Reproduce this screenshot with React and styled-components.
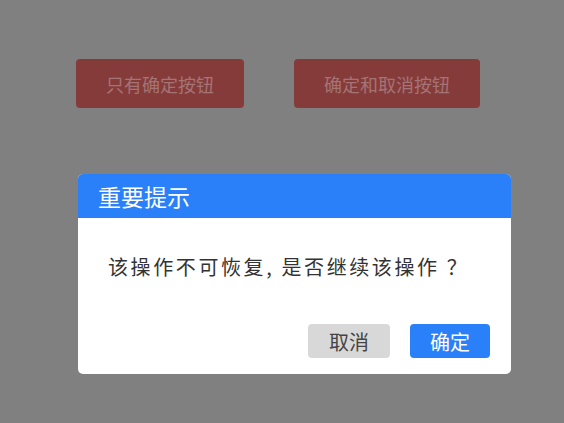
import React from "react";
import styled, { createGlobalStyle } from "styled-components";

const GlobalStyle = createGlobalStyle`
  html, body {
    margin: 0;
    padding: 0;
    background: #808080;
  }
  body {
    font-family: "Microsoft YaHei", "Noto Sans CJK SC", "Noto Sans", sans-serif;
  }
`;

const Page = styled.div`
  width: 564px;
  height: 423px;
  box-sizing: border-box;
  padding: 59px 0 0 76px;
  background: #808080;
`;

const Toolbar = styled.div`
  display: flex;
  gap: 50px;
`;

const DemoButton = styled.button`
  width: ${(p) => p.$width}px;
  height: 49px;
  border: none;
  border-radius: 4px;
  background: #863b3b;
  color: #a47474;
  font-family: inherit;
  font-size: 18px;
  padding: 0;
`;

const Dialog = styled.div`
  margin: 66px 0 0 2px;
  width: 433px;
  height: 200px;
  background: #fff;
  border-radius: 5px;
  overflow: hidden;
  display: flex;
  flex-direction: column;
`;

const Header = styled.div`
  height: 44px;
  background: #2a80f8;
  color: #fff;
  font-size: 23px;
  display: flex;
  align-items: center;
  padding-left: 20px;
`;

const Message = styled.div`
  flex: 1;
  display: flex;
  align-items: center;
  padding: 0 0 10px 30px;
  font-size: 20px;
  letter-spacing: 2.6px;
  color: #333;
  white-space: pre;
`;

const Footer = styled.div`
  display: flex;
  justify-content: flex-end;
  gap: 20px;
  padding: 0 21px 16px 0;
`;

const ActionButton = styled.button`
  width: ${(p) => p.$width}px;
  height: 34px;
  border: none;
  border-radius: 4px;
  padding: 0;
  font-family: inherit;
  font-size: 20px;
  background: ${(p) => (p.$primary ? "#2a80f8" : "#d8d8d8")};
  color: ${(p) => (p.$primary ? "#fff" : "#444")};
`;

export default function App() {
  return (
    <>
      <GlobalStyle />
      <Page>
        <Toolbar>
          <DemoButton $width={168}>只有确定按钮</DemoButton>
          <DemoButton $width={186}>确定和取消按钮</DemoButton>
        </Toolbar>
        <Dialog>
          <Header>重要提示</Header>
          <Message>该操作不可恢复, 是否继续该操作 ？</Message>
          <Footer>
            <ActionButton $width={82}>取消</ActionButton>
            <ActionButton $width={80} $primary>
              确定
            </ActionButton>
          </Footer>
        </Dialog>
      </Page>
    </>
  );
}
